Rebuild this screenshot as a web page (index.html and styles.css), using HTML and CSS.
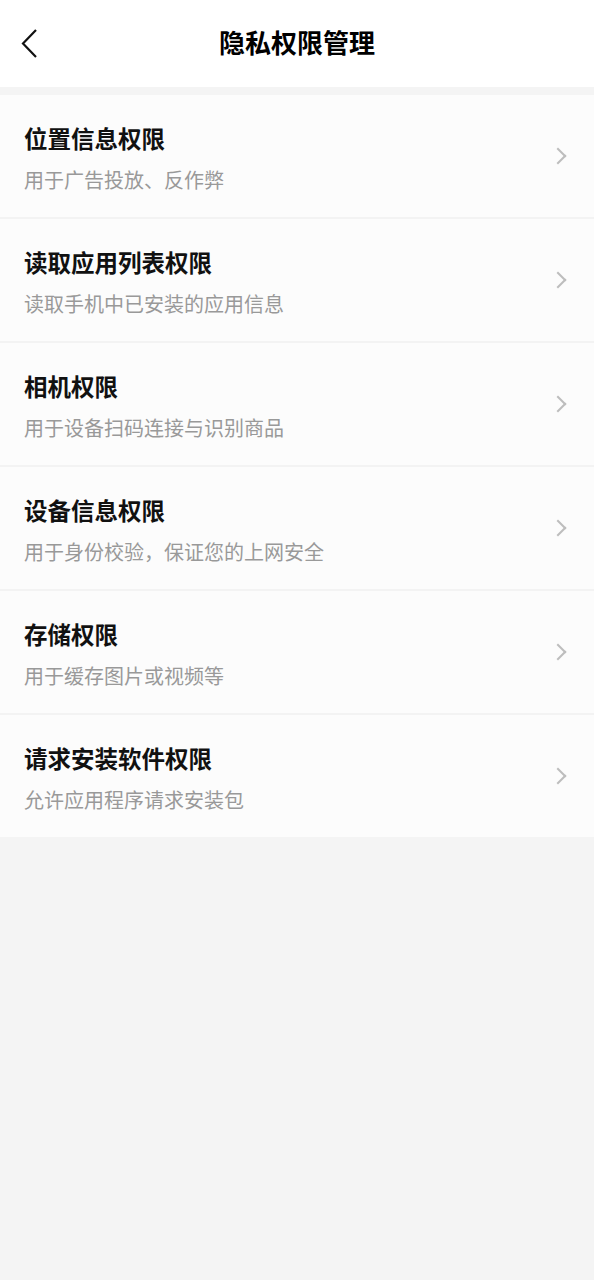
FILE: index.html
```html
<!DOCTYPE html>
<html lang="zh-CN">
<head>
	<meta charset="UTF-8">
	<title>隐私权限管理</title>
	<link rel="stylesheet" href="styles.css">
</head>
<body>
	<header class="topBar">
		<a class="backBtn" href="#">
			<svg width="20" height="32" viewBox="0 0 20 32"><path d="M16 2 L3 15.5 L16 29" fill="none" stroke="#111" stroke-width="2.2"/></svg>
		</a>
		<h1>隐私权限管理</h1>
	</header>
	<ul class="permList">
		<li class="permItem">
			<div class="permText">
				<div class="permName">位置信息权限</div>
				<div class="permDesc">用于广告投放、反作弊</div>
			</div>
			<span class="arrow"></span>
		</li>
		<li class="permItem">
			<div class="permText">
				<div class="permName">读取应用列表权限</div>
				<div class="permDesc">读取手机中已安装的应用信息</div>
			</div>
			<span class="arrow"></span>
		</li>
		<li class="permItem">
			<div class="permText">
				<div class="permName">相机权限</div>
				<div class="permDesc">用于设备扫码连接与识别商品</div>
			</div>
			<span class="arrow"></span>
		</li>
		<li class="permItem">
			<div class="permText">
				<div class="permName">设备信息权限</div>
				<div class="permDesc">用于身份校验，保证您的上网安全</div>
			</div>
			<span class="arrow"></span>
		</li>
		<li class="permItem">
			<div class="permText">
				<div class="permName">存储权限</div>
				<div class="permDesc">用于缓存图片或视频等</div>
			</div>
			<span class="arrow"></span>
		</li>
		<li class="permItem">
			<div class="permText">
				<div class="permName">请求安装软件权限</div>
				<div class="permDesc">允许应用程序请求安装包</div>
			</div>
			<span class="arrow"></span>
		</li>
	</ul>
</body>
</html>
```

FILE: styles.css
```css
* {
	margin: 0;
	padding: 0;
	box-sizing: border-box;
}
body {
	background-color: #f4f4f4;
	font-family: "Noto Sans CJK SC", "Noto Sans", sans-serif;
	min-height: 1280px;
}
.topBar {
	height: 87px;
	background-color: #fff;
	display: flex;
	align-items: center;
	justify-content: center;
	position: relative;
	margin-bottom: 8px;
}
.topBar h1 {
	font-size: 26px;
	font-weight: 700;
	color: #000;
	line-height: 36px;
	margin-top: -3px;
}
.backBtn {
	position: absolute;
	left: 20px;
	top: 28px;
	display: block;
	width: 20px;
	height: 32px;
}
.permList {
	list-style: none;
}
.permItem {
	height: 124px;
	background-color: #fcfcfc;
	border-bottom: 2px solid #f3f3f3;
	display: flex;
	align-items: center;
	padding: 0 30px 0 24px;
}
.permItem:last-child {
	height: 122px;
	border-bottom: none;
}
.permText {
	flex: 1;
	padding-top: 4px;
}
.permName {
	font-size: 23.5px;
	font-weight: 700;
	color: #111;
	line-height: 32px;
}
.permDesc {
	font-size: 20px;
	color: #999;
	line-height: 28px;
	margin-top: 12px;
}
.arrow {
	width: 12px;
	height: 12px;
	border-top: 2px solid #bdbdbd;
	border-right: 2px solid #bdbdbd;
	transform: rotate(45deg);
	margin-top: 0;
}
```
